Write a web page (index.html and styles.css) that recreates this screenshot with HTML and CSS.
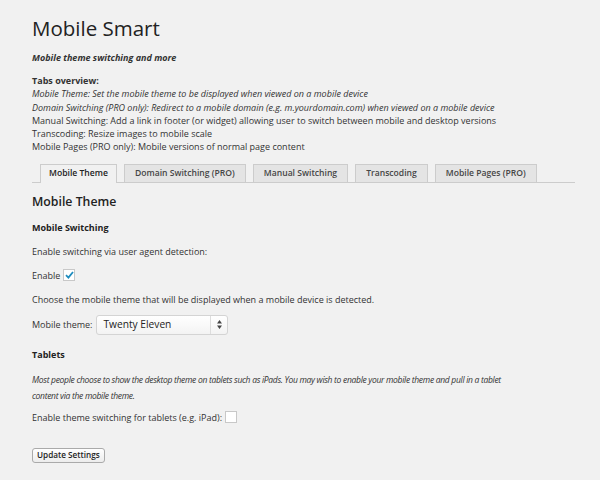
FILE: index.html
```html
<!DOCTYPE html>
<html>
<head>
<meta charset="utf-8">
<link rel="stylesheet" href="styles.css">
</head>
<body>
<div class="wrap">
  <h2 class="title">Mobile Smart</h2>
  <p class="tagline">Mobile theme switching and more</p>
  <div class="overview">
    <strong>Tabs overview:</strong><br>
    <em>Mobile Theme: Set the mobile theme to be displayed when viewed on a mobile device</em><br>
    <em>Domain Switching (PRO only): Redirect to a mobile domain (e.g. m.yourdomain.com) when viewed on a mobile device</em><br>
    Manual Switching: Add a link in footer (or widget) allowing user to switch between mobile and desktop versions<br>
    Transcoding: Resize images to mobile scale<br>
    Mobile Pages (PRO only): Mobile versions of normal page content
  </div>
  <nav class="tabs">
    <a class="tab active">Mobile Theme</a>
    <a class="tab">Domain Switching (PRO)</a>
    <a class="tab">Manual Switching</a>
    <a class="tab">Transcoding</a>
    <a class="tab">Mobile Pages (PRO)</a>
  </nav>
  <h3 class="section">Mobile Theme</h3>
  <h4 class="sub">Mobile Switching</h4>
  <p class="row">Enable switching via user agent detection:</p>
  <p class="row">Enable <span class="check checked"><svg width="9" height="8" viewBox="0 0 9 8"><path d="M1 4.2 L3.4 6.6 L8 1" fill="none" stroke="#1e8cbe" stroke-width="1.8"/></svg></span></p>
  <p class="row">Choose the mobile theme that will be displayed when a mobile device is detected.</p>
  <p class="row select-row">Mobile theme: <span class="select">Twenty Eleven<span class="arrows"><svg width="5" height="9" viewBox="0 0 5 9"><path d="M2.5 0 L5 3.5 L0 3.5Z M2.5 9 L5 5.5 L0 5.5Z" fill="#444"/></svg></span></span></p>
  <h4 class="sub tablets">Tablets</h4>
  <p class="note"><em>Most people choose to show the desktop theme on tablets such as iPads. You may wish to enable your mobile theme and pull in a tablet content via the mobile theme.</em></p>
  <p class="row tablet-row">Enable theme switching for tablets (e.g. iPad):<span class="check"></span></p>
  <button class="btn">Update Settings</button>
</div>
</body>
</html>
```

FILE: styles.css
```css
html, body {
  margin: 0;
  padding: 0;
  background: #f1f1f1;
}
body {
  font-family: "Open Sans", sans-serif;
  font-size: 9px;
  color: #333;
}
.wrap {
  padding: 14px 25px 0 32px;
}
.title {
  font-size: 20.5px;
  font-weight: 400;
  margin: 0;
  line-height: 28px;
  color: #222;
}
.tagline {
  margin: 9px 0 0;
  font-weight: 700;
  font-style: italic;
  line-height: 13px;
}
.overview {
  margin-top: 10px;
  line-height: 13.3px;
}
.tabs {
  display: flex;
  gap: 7px;
  margin-top: 10px;
  padding-left: 8px;
  border-bottom: 1px solid #ccc;
  height: 18px;
}
.tab {
  display: block;
  flex-shrink: 0;
  white-space: nowrap;
  box-sizing: border-box;
  height: 18px;
  line-height: 17px;
  padding: 0 10px;
  background: #e4e4e4;
  border: 1px solid #ccc;
  border-bottom: none;
  font-weight: 600;
  font-size: 8.6px;
  color: #464646;
}
.tab.active {
  background: #f1f1f1;
  color: #222;
  height: 19px;
  padding: 0 8px;
}
.section {
  font-size: 12.3px;
  font-weight: 600;
  margin: 11px 0 0;
  line-height: 16px;
  color: #222;
}
.sub {
  font-size: 9px;
  font-weight: 700;
  margin: 11px 0 0;
  line-height: 13px;
  color: #222;
}
.row {
  margin: 11px 0 0;
  line-height: 13px;
  display: flex;
  align-items: center;
  gap: 3px;
}
.check {
  display: inline-flex;
  align-items: center;
  justify-content: center;
  width: 10px;
  height: 10px;
  border: 1px solid #c8c8c8;
  background: #fff;
}
.select-row {
  margin-top: 9px;
}
.select {
  display: inline-flex;
  align-items: center;
  justify-content: space-between;
  box-sizing: border-box;
  width: 132px;
  height: 20px;
  padding: 0 5px 0 6px;
  border: 1px solid #d4d4d4;
  border-radius: 3px;
  background: linear-gradient(#fff, #f3f3f3);
  font-size: 10.2px;
  color: #222;
  margin-left: 1px;
}
.arrows {
  border-left: 1px solid #ddd;
  height: 18px;
  padding-left: 6px;
  display: flex;
  align-items: center;
}
.tablets {
  margin-top: 13px;
}
.note {
  margin: 11px 0 0;
  line-height: 16px;
  font-size: 8.5px;
  letter-spacing: -0.3px;
  max-width: 476px;
}
.tablet-row {
  margin-top: 7px;
}
.btn {
  display: block;
  margin-top: 24px;
  font-family: "Open Sans", sans-serif;
  font-size: 8.2px;
  font-weight: 600;
  color: #222;
  height: 15px;
  line-height: 12px;
  padding: 0 4px;
  border: 1px solid #aaa;
  border-radius: 3px;
  background: linear-gradient(#fff, #ececec);
}
```
